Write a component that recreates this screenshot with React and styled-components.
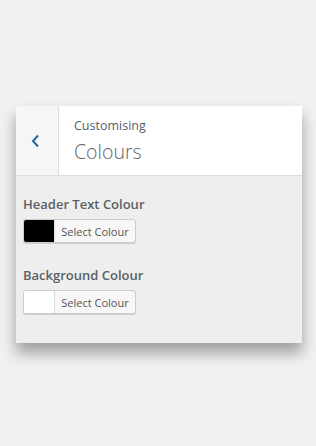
import styled, { createGlobalStyle } from "styled-components";

const GlobalStyle = createGlobalStyle`
  html, body {
    margin: 0;
    background: #f1f1f1;
    font-family: "Open Sans", "Noto Sans", sans-serif;
  }
`;

const Page = styled.div`
  padding: 106px 0 0 16px;
  height: 446px;
  box-sizing: border-box;
`;

const Panel = styled.section`
  width: 286px;
  height: 237px;
  background: #eeeeee;
  box-shadow: 0 10px 14px rgba(0, 0, 0, 0.35);
`;

const Header = styled.header`
  display: flex;
  height: 69px;
  background: #fff;
  border-bottom: 1px solid #dddddd;
`;

const BackButton = styled.button`
  width: 43px;
  border: 0;
  border-right: 1px solid #dddddd;
  background: #f6f6f6;
  display: flex;
  align-items: center;
  justify-content: center;
  padding: 0 4px 0 0;
  color: #1a6b9a;
`;

const Titles = styled.div`
  display: flex;
  flex-direction: column;
  padding: 11px 0 0 15px;
`;

const Small = styled.span`
  font-size: 12.5px;
  color: #555d66;
  line-height: 18px;
`;

const Big = styled.h2`
  margin: 5px 0 0;
  font-size: 19.5px;
  font-weight: 300;
  line-height: 24px;
  color: #5f666d;
`;

const Body = styled.div`
  padding: 19px 7px 0;
  display: flex;
  flex-direction: column;
  gap: 23px;
`;

const Control = styled.div`
  display: flex;
  flex-direction: column;
  gap: 6px;
`;

const Label = styled.span`
  font-size: 13px;
  font-weight: 600;
  color: #5a6067;
  line-height: 18px;
`;

const PickerButton = styled.button`
  display: flex;
  align-items: stretch;
  width: 113px;
  height: 24px;
  padding: 0;
  border: 1px solid #cccccc;
  border-radius: 3px;
  background: #f7f7f7;
  box-shadow: 0 1px 0 #cccccc;
  overflow: hidden;
  font-family: inherit;
`;

const Swatch = styled.span`
  width: 30px;
  background: ${(p) => p.color};
  border-right: 1px solid #dddddd;
`;

const PickerText = styled.span`
  flex: 1;
  display: flex;
  align-items: center;
  justify-content: center;
  font-size: 11px;
  color: #555;
`;

const colours = [
  { label: "Header Text Colour", color: "#000000" },
  { label: "Background Colour", color: "#ffffff" },
];

export default function App() {
  return (
    <Page>
      <GlobalStyle />
      <Panel>
        <Header>
          <BackButton aria-label="Back">
            <svg width="9" height="14" viewBox="0 0 9 14">
              <path d="M7 1.5 L2 7 L7 12.5" fill="none" stroke="currentColor" strokeWidth="2" />
            </svg>
          </BackButton>
          <Titles>
            <Small>Customising</Small>
            <Big>Colours</Big>
          </Titles>
        </Header>
        <Body>
          {colours.map(({ label, color }) => (
            <Control key={label}>
              <Label>{label}</Label>
              <PickerButton>
                <Swatch color={color} />
                <PickerText>Select Colour</PickerText>
              </PickerButton>
            </Control>
          ))}
        </Body>
      </Panel>
    </Page>
  );
}
